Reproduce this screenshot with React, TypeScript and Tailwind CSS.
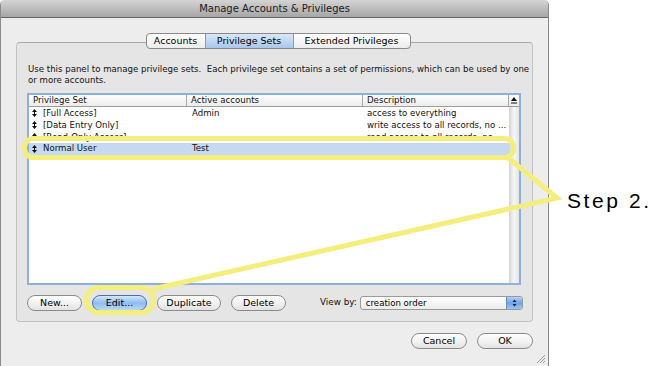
import React from "react";

const font = { fontFamily: '"DejaVu Sans", "Liberation Sans", sans-serif' };

function Handle() {
  return (
    <svg width="5" height="8" viewBox="0 0 5 8" className="shrink-0">
      <path d="M2.5 0 L5 3 L0 3 Z M0 5 L5 5 L2.5 8 Z" fill="#111" />
      <rect x="2" y="2.5" width="1" height="3" fill="#111" />
    </svg>
  );
}

function PillButton({ label, w, blue }: { label: string; w: number; blue?: boolean }) {
  return (
    <div
      className={
        "h-[16px] rounded-full border flex items-center justify-center text-[9.5px] text-black " +
        (blue
          ? "border-[#4a6fa8] bg-gradient-to-b from-[#d6e8fb] via-[#8fbcef] to-[#b9daf8]"
          : "border-[#8c8c8c] bg-gradient-to-b from-[#ffffff] via-[#f2f2f2] to-[#e2e2e2]")
      }
      style={{ width: w }}
    >
      {label}
    </div>
  );
}

const rows = [
  { name: "[Full Access]", acc: "Admin", desc: "access to everything" },
  { name: "[Data Entry Only]", acc: "", desc: "write access to all records, no ..." },
  { name: "[Read-Only Access]", acc: "", desc: "read access to all records, no ..." },
  { name: "Normal User", acc: "Test", desc: "", sel: true },
];

export default function App() {
  return (
    <div className="relative w-[655px] h-[366px] bg-white overflow-hidden flex" style={font}>
      {/* window */}
      <div className="w-[549px] h-[370px] flex flex-col border-x border-[#8a8a8a] rounded-t-[5px] overflow-hidden">
        <div className="h-[18px] shrink-0 bg-gradient-to-b from-[#d4d4d4] to-[#a6a6a6] border-b border-[#666] flex items-center justify-center text-[10px] text-[#1a1a1a]">
          Manage Accounts &amp; Privileges
        </div>
        <div className="flex-1 bg-[#ededed] flex flex-col pt-[15px] pl-[15px] pr-[15px]">
          {/* tabs */}
          <div className="flex justify-center relative z-10 h-[16px]">
            <div className="flex border border-[#8a8a8a] rounded-[4px] overflow-hidden text-[9.5px] text-black bg-gradient-to-b from-white to-[#ececec] ml-[7px]">
              <div className="w-[59px] flex items-center justify-center border-r border-[#9a9a9a]">Accounts</div>
              <div className="w-[88px] flex items-center justify-center border-r border-[#9a9a9a] bg-gradient-to-b from-[#d9e7f8] to-[#a8c7ec]">Privilege Sets</div>
              <div className="w-[116px] flex items-center justify-center">Extended Privileges</div>
            </div>
          </div>
          {/* group box */}
          <div className="-mt-[7px] w-[517px] h-[280px] border border-[#c2c2c2] border-t-[#a9a9a9] rounded-[4px] bg-[#e5e5e5] flex flex-col pl-[10px] pt-[21px]">
            <div className="text-[8.6px] leading-[11px] text-[#111] pl-[1px]">
              Use this panel to manage privilege sets.&nbsp; Each privilege set contains a set of permissions, which can be used by one
              <br />
              or more accounts.
            </div>
            <div className="mt-[7px] w-[494px] h-[192px] shrink-0 border-2 border-[#8fb0de] bg-white flex flex-col text-[8.6px] text-[#111]">
              <div className="flex h-[12px] border-b border-[#9c9c9c] bg-gradient-to-b from-white to-[#ececec]">
                <div className="w-[158px] border-r border-[#a8a8a8] pl-[4px] flex items-center">Privilege Set</div>
                <div className="w-[176px] border-r border-[#a8a8a8] pl-[4px] flex items-center">Active accounts</div>
                <div className="w-[146px] border-r border-[#a8a8a8] pl-[4px] flex items-center">Description</div>
                <div className="flex-1 flex items-center justify-center">
                  <svg width="6" height="7" viewBox="0 0 6 7">
                    <path d="M3 0 L6 4 L0 4 Z" fill="#111" />
                    <rect x="0" y="5.5" width="6" height="1" fill="#111" />
                  </svg>
                </div>
              </div>
              <div className="flex flex-1">
                <div className="w-[480px] flex flex-col">
                  {rows.map((r, i) => (
                    <div
                      key={i}
                      className={"flex h-[12px] items-center " + (r.sel ? "bg-[#c5d9f1] mt-[-0.5px]" : "")}
                    >
                      <div className="w-[158px] flex items-center pl-[3px] gap-[6px]">
                        <Handle />
                        <span>{r.name}</span>
                      </div>
                      <div className="w-[176px] pl-[5px]">{r.acc}</div>
                      <div className="w-[146px] pl-[4px] whitespace-nowrap">{r.desc}</div>
                    </div>
                  ))}
                </div>
                <div className="flex-1 bg-gradient-to-r from-[#d4d4d4] via-[#f7f7f7] to-[#e4e4e4]" />
              </div>
            </div>
            <div className="mt-[10px] flex items-center text-[9.5px]">
              <div className="flex gap-[10px]">
                <PillButton label="New..." w={55} />
                <PillButton label="Edit..." w={55} blue />
                <PillButton label="Duplicate" w={64} />
                <PillButton label="Delete" w={55} />
              </div>
              <div className="ml-[34px] text-[8.8px] text-[#111]">View by:</div>
              <div className="ml-[3px] w-[163px] h-[14px] border border-[#9a9a9a] rounded-[3px] bg-gradient-to-b from-white to-[#ececec] flex items-center text-[8.6px] overflow-hidden">
                <span className="flex-1 pl-[5px]">creation order</span>
                <div className="w-[16px] h-full bg-gradient-to-b from-[#b7d3f3] via-[#6fa3e6] to-[#9cc4f2] border-l border-[#6a8fc4] flex items-center justify-center">
                  <svg width="5" height="8" viewBox="0 0 5 8">
                    <path d="M2.5 0.5 L4.5 3 L0.5 3 Z M0.5 5 L4.5 5 L2.5 7.5 Z" fill="#102040" />
                  </svg>
                </div>
              </div>
            </div>
          </div>
          <div className="mt-[11px] flex justify-end gap-[10px]">
            <PillButton label="Cancel" w={56} />
            <PillButton label="OK" w={56} />
          </div>
          <div className="flex justify-end mt-[4px] -mr-[13px]">
            <svg width="11" height="11" viewBox="0 0 11 11">
              <path d="M10 2 L2 10 M10 5 L5 10 M10 8 L8 10" stroke="#9a9a9a" strokeWidth="1" />
            </svg>
          </div>
        </div>
      </div>

      {/* annotation overlay */}
      <svg className="absolute inset-0 pointer-events-none" width="655" height="366" viewBox="0 0 655 366">
        <rect x="24.5" y="138.5" width="489" height="19" rx="9" fill="none" stroke="#f4ee7c" strokeWidth="5" />
        <polyline points="506,156 557,198 153,289" fill="none" stroke="#f4ee7c" strokeWidth="5" strokeLinejoin="miter" />
        <rect x="86.5" y="287.5" width="67" height="25" rx="12" fill="none" stroke="#f4ee7c" strokeWidth="5" />
      </svg>
      <div
        className="absolute left-[567px] top-[190px] text-[21px] leading-[22px] tracking-[2.6px] text-black"
        style={{ fontFamily: '"Liberation Sans", Arial, sans-serif' }}
      >
        Step 2.
      </div>
    </div>
  );
}
